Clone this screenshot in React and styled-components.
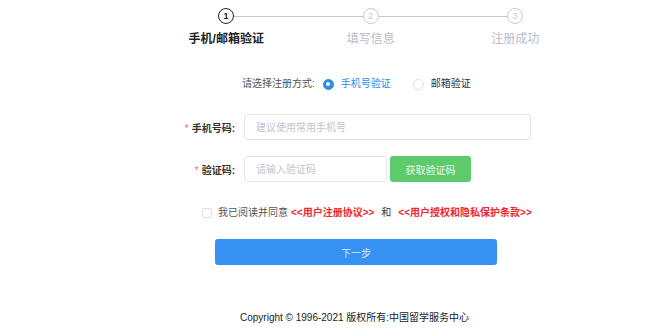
import React from "react";
import styled, { createGlobalStyle } from "styled-components";

const Global = createGlobalStyle`
  html, body { margin: 0; padding: 0; background: #fff; }
  body { font-family: "Liberation Sans", "Noto Sans CJK SC", sans-serif; }
  * { box-sizing: border-box; }
`;

const Page = styled.div`
  width: 671px;
  height: 336px;
  background: #fff;
  display: flex;
  flex-direction: column;
  overflow: hidden;
`;

const Track = styled.div`
  display: flex;
  align-items: center;
  padding-left: 218px;
  padding-top: 8px;
`;

const Circle = styled.div`
  width: 16px;
  height: 16px;
  border-radius: 50%;
  border: 1.5px solid ${(p) => (p.$active ? "#222" : "#c6c9cf")};
  color: ${(p) => (p.$active ? "#222" : "#c6c9cf")};
  font-size: 9px;
  font-weight: ${(p) => (p.$active ? 700 : 400)};
  display: flex;
  align-items: center;
  justify-content: center;
  line-height: 1;
`;

const Line = styled.div`
  width: 128.5px;
  height: 1px;
  background: #c6c9d1;
`;

const Labels = styled.div`
  display: grid;
  grid-template-columns: repeat(3, 144.5px);
  margin-left: 154px;
  margin-top: 7px;
`;

const StepLabel = styled.div`
  text-align: center;
  font-size: 12px;
  line-height: 16px;
  font-weight: ${(p) => (p.$active ? 700 : 400)};
  color: ${(p) => (p.$active ? "#222" : "#b8bcc4")};
`;

const RadioRow = styled.div`
  display: flex;
  align-items: center;
  padding-left: 242px;
  margin-top: 30px;
  font-size: 10px;
  line-height: 14px;
  height: 14px;
`;

const Prompt = styled.span`
  color: #555;
  margin-right: 8px;
`;

const Radio = styled.span`
  width: 11px;
  height: 11px;
  border-radius: 50%;
  border: 1px solid ${(p) => (p.$checked ? "#2d8cf0" : "#dcdfe6")};
  background: ${(p) => (p.$checked ? "#2d8cf0" : "#fff")};
  display: inline-flex;
  align-items: center;
  justify-content: center;
  margin-right: 7px;
  &::after {
    content: "";
    width: 4px;
    height: 4px;
    border-radius: 50%;
    background: #fff;
    display: ${(p) => (p.$checked ? "block" : "none")};
  }
`;

const RadioText = styled.span`
  color: ${(p) => (p.$checked ? "#2d8cf0" : "#333")};
  margin-right: ${(p) => (p.$checked ? "22px" : "0")};
`;

const Form = styled.div`
  display: flex;
  flex-direction: column;
  gap: 16px;
  margin-top: 23px;
`;

const FieldRow = styled.div`
  display: flex;
  align-items: center;
  gap: 9px;
`;

const FieldLabel = styled.label`
  width: 235px;
  text-align: right;
  font-size: 10px;
  font-weight: 700;
  color: #333;
  &::before {
    content: "*";
    color: #f56c6c;
    font-weight: 400;
    margin-right: 3px;
  }
`;

const Input = styled.input`
  width: ${(p) => p.$w}px;
  height: 26px;
  border: 1px solid #e3e5ea;
  border-radius: 3px;
  padding: 0 11px;
  font-size: 10px;
  font-family: inherit;
  outline: none;
  color: #333;
  &::placeholder { color: #c0c4cc; }
`;

const CodeButton = styled.button`
  width: 81px;
  height: 26px;
  margin-left: -6px;
  border: none;
  border-radius: 3px;
  background: #5dca6c;
  color: #eafbe9;
  font-size: 10px;
  font-family: inherit;
  padding: 0;
`;

const AgreeRow = styled.div`
  display: flex;
  align-items: center;
  padding-left: 202px;
  margin-top: 24px;
  font-size: 10px;
  line-height: 14px;
  color: #555;
`;

const Check = styled.span`
  width: 10px;
  height: 10px;
  border: 1px solid #dcdfe6;
  border-radius: 2px;
  margin-right: 6px;
`;

const Link = styled.span`
  color: #f0282d;
  font-weight: 700;
  margin: 0 3px;
`;

const And = styled.span`
  color: #333;
  margin: 0 4px;
`;

const NextButton = styled.button`
  margin-left: 215px;
  margin-top: 19px;
  width: 282px;
  height: 26px;
  border: none;
  border-radius: 3px;
  background: #3592f3;
  color: #d9e9fd;
  font-size: 10px;
  font-family: inherit;
  padding: 0;
`;

const Footer = styled.div`
  margin-top: 46px;
  padding-left: 240px;
  font-size: 10px;
  line-height: 14px;
  color: #222;
`;

export default function App() {
  return (
    <Page>
      <Global />
      <Track>
        <Circle $active>1</Circle>
        <Line />
        <Circle>2</Circle>
        <Line />
        <Circle>3</Circle>
      </Track>
      <Labels>
        <StepLabel $active>手机/邮箱验证</StepLabel>
        <StepLabel>填写信息</StepLabel>
        <StepLabel>注册成功</StepLabel>
      </Labels>
      <RadioRow>
        <Prompt>请选择注册方式:</Prompt>
        <Radio $checked />
        <RadioText $checked>手机号验证</RadioText>
        <Radio />
        <RadioText>邮箱验证</RadioText>
      </RadioRow>
      <Form>
        <FieldRow>
          <FieldLabel>手机号码:</FieldLabel>
          <Input $w={287} placeholder="建议使用常用手机号" />
        </FieldRow>
        <FieldRow>
          <FieldLabel>验证码:</FieldLabel>
          <Input $w={143} placeholder="请输入验证码" />
          <CodeButton>获取验证码</CodeButton>
        </FieldRow>
      </Form>
      <AgreeRow>
        <Check />
        我已阅读并同意
        <Link>&lt;&lt;用户注册协议&gt;&gt;</Link>
        <And>和</And>
        <Link>&lt;&lt;用户授权和隐私保护条款&gt;&gt;</Link>
      </AgreeRow>
      <NextButton>下一步</NextButton>
      <Footer>Copyright © 1996-2021 版权所有:中国留学服务中心</Footer>
    </Page>
  );
}
